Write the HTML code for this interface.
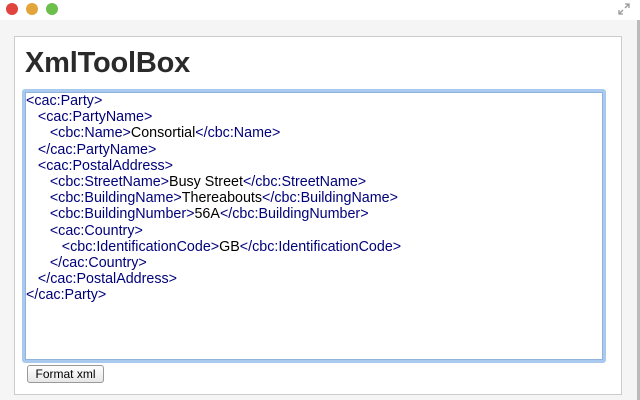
<!DOCTYPE html>
<html><head><style>
body{margin:0;width:640px;height:400px;background:#f5f5f5;font-family:"Liberation Sans",sans-serif;position:relative;overflow:hidden}
.top{position:absolute;left:0;top:0;width:640px;height:20px;background:#fff}
.dot{position:absolute;top:3px;width:12px;height:12px;border-radius:50%}
.panel{position:absolute;left:14px;top:36px;width:606px;height:357px;background:#fff;border:1px solid #ccc}
h1{position:absolute;left:25px;top:47px;margin:0;font-size:29px;font-weight:bold;color:#2a2a2a;letter-spacing:-0.2px}
.ta{position:absolute;left:22px;top:89px;width:578px;height:268px;border:3px solid #a9c9ee;border-radius:3px;background:#fff;box-shadow:inset 0 0 0 1px #8fb3dd}
.code{position:absolute;left:26px;top:93px;font-size:14.3px;line-height:16.2px;color:#00007a;white-space:pre;letter-spacing:0}
.code b{font-weight:normal;color:#000}
.btn{position:absolute;left:27px;top:365px;width:75px;height:16px;border:1px solid #999;border-radius:3px;background:linear-gradient(#fff,#e6e6e6);font-size:12px;line-height:16px;text-align:center;color:#000}
.edge{position:absolute;right:0;top:20px;width:3px;height:380px;background:#bbb}
</style></head><body>
<div class="top">
<div class="dot" style="left:6px;background:#e0443e"></div>
<div class="dot" style="left:26px;background:#e2a53a"></div>
<div class="dot" style="left:46px;background:#6cbf4a"></div>
<svg style="position:absolute;left:618px;top:3px" width="12" height="12" viewBox="0 0 12 12"><path d="M7 1h4v4M11 1L7 5M5 11H1V7M1 11l4-4" stroke="#999" stroke-width="1.3" fill="none"/></svg>
</div>
<div class="edge"></div>
<div class="panel"></div>
<h1>XmlToolBox</h1>
<div class="ta"></div>
<div class="code">&lt;cac:Party&gt;
   &lt;cac:PartyName&gt;
      &lt;cbc:Name&gt;<b>Consortial</b>&lt;/cbc:Name&gt;
   &lt;/cac:PartyName&gt;
   &lt;cac:PostalAddress&gt;
      &lt;cbc:StreetName&gt;<b>Busy Street</b>&lt;/cbc:StreetName&gt;
      &lt;cbc:BuildingName&gt;<b>Thereabouts</b>&lt;/cbc:BuildingName&gt;
      &lt;cbc:BuildingNumber&gt;<b>56A</b>&lt;/cbc:BuildingNumber&gt;
      &lt;cac:Country&gt;
         &lt;cbc:IdentificationCode&gt;<b>GB</b>&lt;/cbc:IdentificationCode&gt;
      &lt;/cac:Country&gt;
   &lt;/cac:PostalAddress&gt;
&lt;/cac:Party&gt;</div>
<div class="btn">Format xml</div>
</body></html>
